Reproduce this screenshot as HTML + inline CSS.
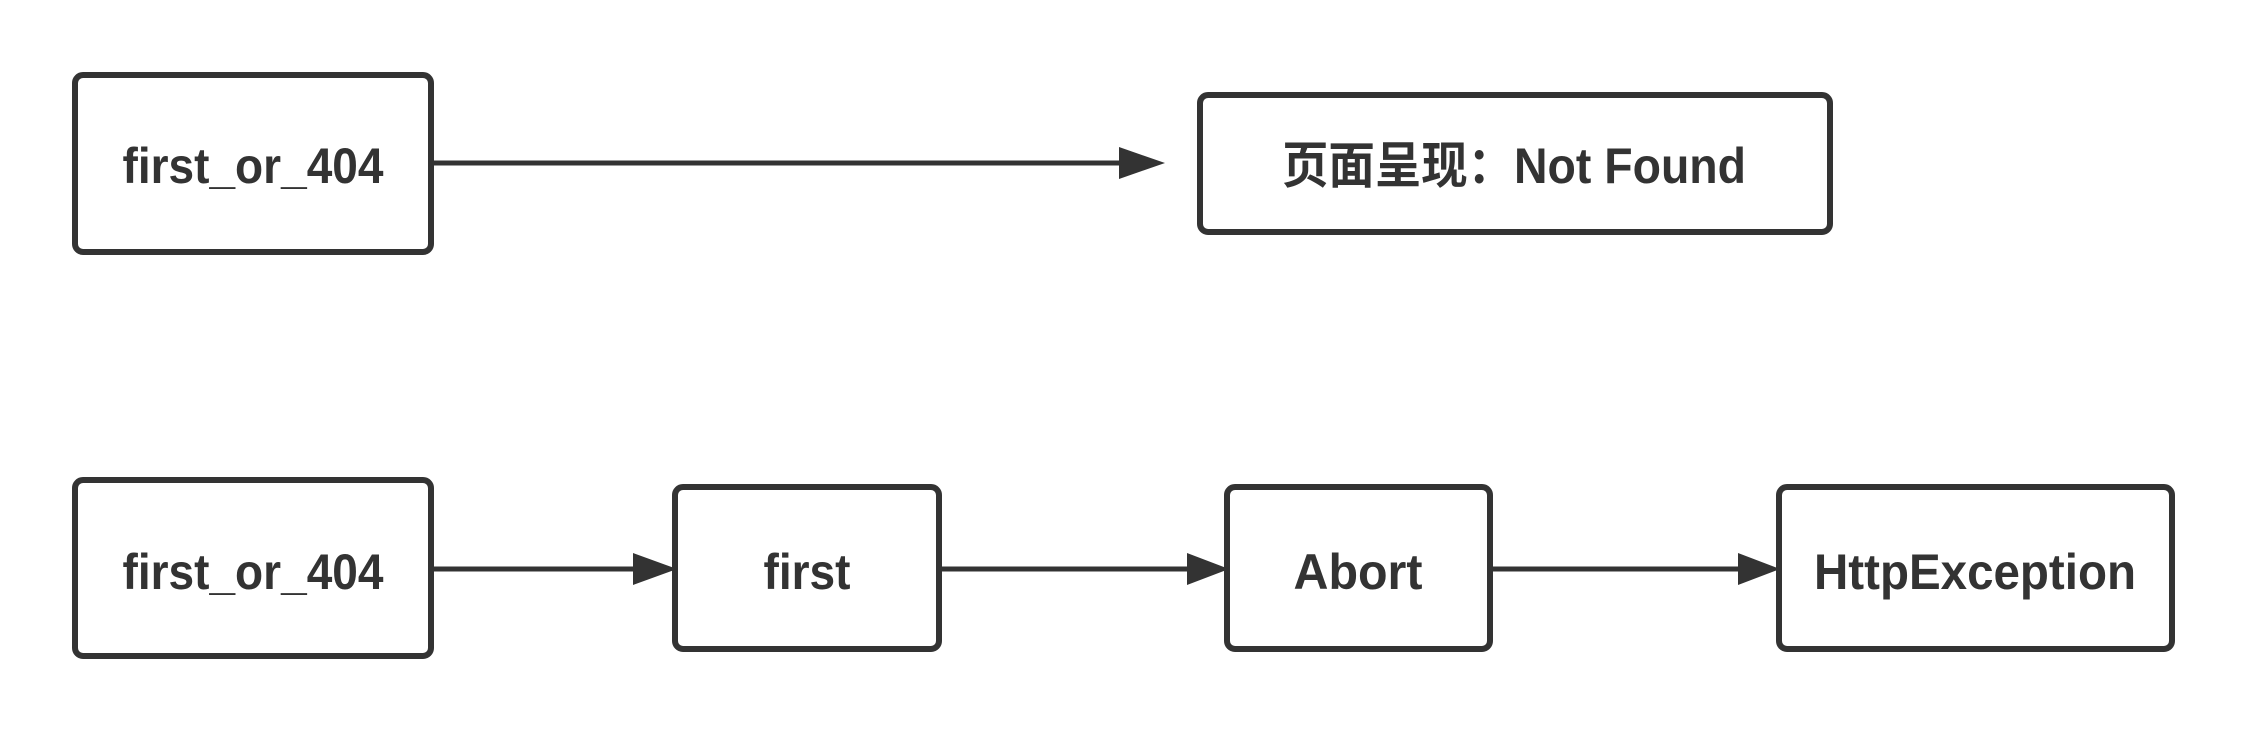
<!DOCTYPE html>
<html><head><meta charset="utf-8"><style>
html,body{margin:0;padding:0;background:#fff;width:2247px;height:732px;overflow:hidden}
svg{display:block}
text{font-family:"Liberation Sans","Noto Sans CJK SC",sans-serif;font-weight:bold;font-size:50px;fill:#333}
</style></head><body>
<svg width="2247" height="732" viewBox="0 0 2247 732">
<g fill="#fff" stroke="#333" stroke-width="6">
<rect x="75" y="75" width="356" height="177" rx="8"/>
<rect x="1200" y="95" width="630" height="137" rx="8"/>
<rect x="75" y="480" width="356" height="176" rx="8"/>
<rect x="675" y="487" width="264" height="162" rx="8"/>
<rect x="1227" y="487" width="263" height="162" rx="8"/>
<rect x="1779" y="487" width="393" height="162" rx="8"/>
</g>
<g stroke="#333" stroke-width="5">
<line x1="431" y1="163" x2="1125" y2="163"/>
<line x1="431" y1="569" x2="640" y2="569"/>
<line x1="939" y1="569" x2="1193" y2="569"/>
<line x1="1490" y1="569" x2="1744" y2="569"/>
</g>
<g fill="#333">
<polygon points="1119,147 1165,163 1119,179"/>
<polygon points="633,553 677,569 633,585"/>
<polygon points="1187,553 1229,569 1187,585"/>
<polygon points="1738,553 1780,569 1738,585"/>
</g>
<g text-anchor="middle" lengthAdjust="spacingAndGlyphs">
<text x="253" y="183" textLength="261" lengthAdjust="spacingAndGlyphs">first_or_404</text>
<text x="1514" y="183" textLength="464" lengthAdjust="spacingAndGlyphs">页面呈现：Not Found</text>
<text x="253" y="589" textLength="261" lengthAdjust="spacingAndGlyphs">first_or_404</text>
<text x="807" y="589" textLength="87" lengthAdjust="spacingAndGlyphs">first</text>
<text x="1358" y="589" textLength="129" lengthAdjust="spacingAndGlyphs">Abort</text>
<text x="1975" y="589" textLength="322" lengthAdjust="spacingAndGlyphs">HttpException</text>
</g>
</svg>
</body></html>
